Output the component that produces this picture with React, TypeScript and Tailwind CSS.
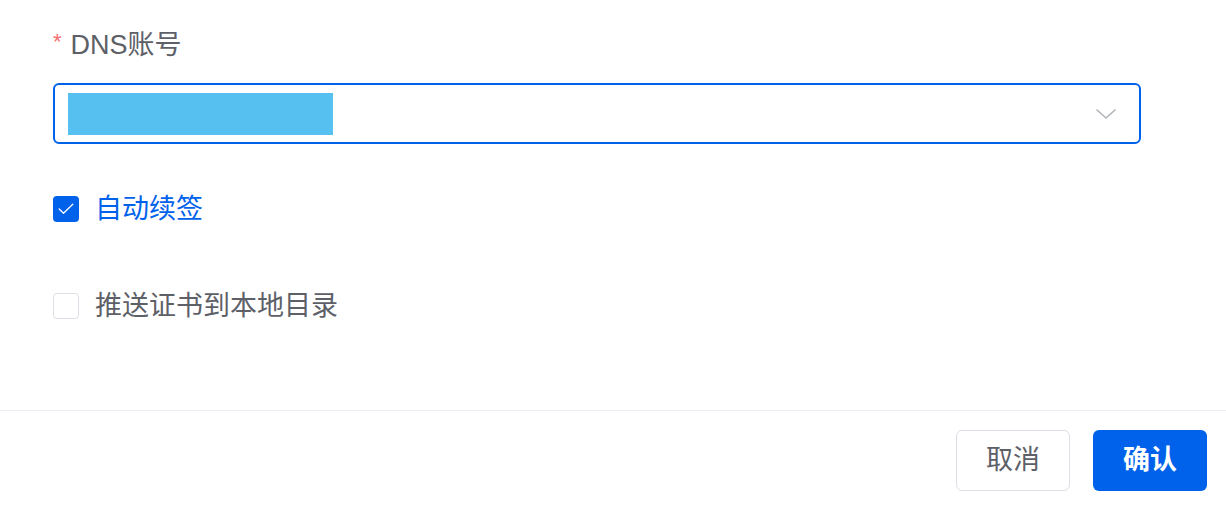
import React from "react";

const font = { fontFamily: '"Liberation Sans", "Noto Sans CJK SC", sans-serif' };

function Check() {
  return (
    <svg width="16" height="12" viewBox="0 0 16 12" fill="none">
      <path d="M1.2 6 L5.5 10.2 L14.8 1.2" stroke="white" strokeWidth="1.3" strokeLinecap="round" strokeLinejoin="round" />
    </svg>
  );
}

export default function App() {
  return (
    <div className="w-[1226px] h-[508px] bg-white flex flex-col" style={font}>
      <div className="flex-1 pl-[53px] pr-[85px] pt-[27px]">
        <div className="flex items-center h-[36px] text-[27px] text-[#5d6067] leading-none">
          <span className="text-[#f56c6c] text-[22px] mr-[9px] -mt-[6px]">*</span>
          <span>DNS账号</span>
        </div>
        <div className="mt-[20px] h-[61px] w-[1088px] rounded-[6px] border-2 border-[#0062eb] flex items-center pl-[13px] pr-[22px]">
          <div className="w-[265px] h-[42px] bg-[#56c1f0]" />
          <div className="flex-1" />
          <svg width="22" height="12" viewBox="0 0 22 12" fill="none">
            <path d="M1.5 1.5 L11 10 L20.5 1.5" stroke="#b0b3b8" strokeWidth="1.5" />
          </svg>
        </div>
        <div className="mt-[52px] flex items-center h-[26px]">
          <div className="w-[26px] h-[26px] rounded-[4px] bg-[#0062eb] flex items-center justify-center">
            <Check />
          </div>
          <span className="ml-[16px] text-[27px] text-[#0062eb] leading-none">自动续签</span>
        </div>
        <div className="mt-[71px] flex items-center h-[26px]">
          <div className="w-[26px] h-[26px] rounded-[4px] border border-[#dcdfe6] bg-white" />
          <span className="ml-[16px] text-[27px] text-[#5d6067] leading-none">推送证书到本地目录</span>
        </div>
      </div>
      <div className="h-[98px] border-t border-[#ebeef5] flex items-start justify-end pt-[19px] pr-[19px] gap-[23px]">
        <button className="w-[114px] h-[61px] rounded-[6px] border border-[#dcdfe6] bg-white text-[27px] text-[#5d6067] leading-none">
          取消
        </button>
        <button className="w-[114px] h-[61px] rounded-[6px] bg-[#0062eb] text-[27px] text-white font-semibold leading-none">
          确认
        </button>
      </div>
    </div>
  );
}
